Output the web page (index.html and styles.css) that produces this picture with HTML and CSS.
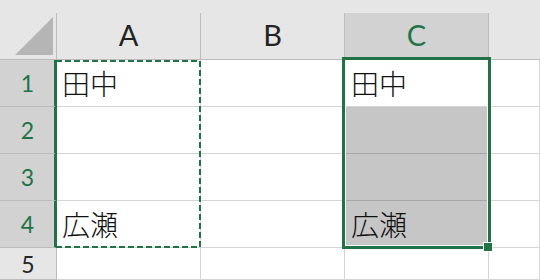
FILE: index.html
```html
<!DOCTYPE html>
<html lang="ja">
<head>
<meta charset="utf-8">
<title>Sheet</title>
<link rel="stylesheet" href="styles.css">
</head>
<body>
<div class="sheet">
  <div class="topbar"></div>
  <div class="corner">
    <svg class="tri" width="56" height="46" viewBox="0 0 56 46"><polygon points="15,42 53,42 53,4" fill="#b5b5b5"/></svg>
  </div>
  <div class="colhead">A</div>
  <div class="colhead">B</div>
  <div class="colhead selhead">C</div>
  <div class="colhead lasthead"></div>

  <div class="rowhead selrow">1</div>
  <div class="cell">田中</div>
  <div class="cell"></div>
  <div class="cell active">田中</div>
  <div class="cell"></div>

  <div class="rowhead selrow">2</div>
  <div class="cell"></div>
  <div class="cell"></div>
  <div class="cell shaded"></div>
  <div class="cell"></div>

  <div class="rowhead selrow">3</div>
  <div class="cell"></div>
  <div class="cell"></div>
  <div class="cell shaded"></div>
  <div class="cell"></div>

  <div class="rowhead selrow">4</div>
  <div class="cell">広瀬</div>
  <div class="cell"></div>
  <div class="cell shaded lastsel">広瀬</div>
  <div class="cell"></div>

  <div class="rowhead">5</div>
  <div class="cell"></div>
  <div class="cell"></div>
  <div class="cell"></div>
  <div class="cell"></div>

  <svg class="copy" width="147" height="189" viewBox="0 0 147 189"><rect x="1" y="1" width="144" height="186" fill="none" stroke="#217346" stroke-width="2" stroke-dasharray="6 3"/></svg>
  <div class="selection"></div>
  <div class="handle"></div>
</div>
</body>
</html>
```

FILE: styles.css
```css
html, body {
  margin: 0;
  padding: 0;
  background: #ffffff;
}

.sheet {
  position: relative;
  width: 540px;
  height: 280px;
  overflow: hidden;
  display: grid;
  grid-template-columns: 57px 144px 144px 144px 1fr;
  grid-template-rows: 13px 47px repeat(4, 47px) 1fr;
  background: #ffffff;
}

.topbar {
  grid-column: 1 / -1;
  background: #e6e6e6;
}

.corner {
  position: relative;
  background: #e6e6e6;
  border-right: 1px solid #bcbcbc;
  border-bottom: 1px solid #bcbcbc;
}

.tri {
  display: block;
}

.colhead {
  display: flex;
  align-items: center;
  justify-content: center;
  padding-bottom: 4px;
  box-sizing: border-box;
  background: #e6e6e6;
  border-right: 1px solid #bcbcbc;
  border-bottom: 1px solid #bcbcbc;
  font-family: Lato, "Liberation Sans", sans-serif;
  font-size: 29px;
  color: #222222;
}

.selhead {
  background: #d2d2d2;
  color: #217346;
}

.lasthead {
  border-right: none;
}

.rowhead {
  display: flex;
  align-items: center;
  justify-content: center;
  box-sizing: border-box;
  background: #e6e6e6;
  border-right: 1px solid #bcbcbc;
  border-bottom: 1px solid #bcbcbc;
  font-family: Lato, "Liberation Sans", sans-serif;
  font-size: 23px;
  color: #262626;
}

.selrow {
  background: #d2d2d2;
  color: #217346;
  border-right: 3px solid #217346;
  padding-left: 1px;
}

.cell {
  display: flex;
  align-items: center;
  box-sizing: border-box;
  padding-left: 5px;
  border-right: 1px solid #d4d4d4;
  border-bottom: 1px solid #d4d4d4;
  font-family: "Noto Sans CJK JP", sans-serif;
  font-weight: 300;
  font-size: 28px;
  color: #111111;
}

.active {
  padding-left: 6px;
}

.shaded {
  background: #c6c6c6;
  border-bottom-color: #a8a8a8;
  padding-left: 6px;
}

.lastsel {
  border-bottom-color: #d4d4d4;
}

.copy {
  position: absolute;
  left: 55px;
  top: 60px;
  overflow: visible;
}

.selection {
  position: absolute;
  left: 342px;
  top: 57px;
  width: 149px;
  height: 192px;
  box-sizing: border-box;
  border: 3px solid #217346;
  box-shadow: inset 0 0 0 1px #ffffff;
}

.handle {
  position: absolute;
  left: 483px;
  top: 242px;
  width: 10px;
  height: 10px;
  box-sizing: border-box;
  background: #217346;
  border: 1px solid #ffffff;
}
```
